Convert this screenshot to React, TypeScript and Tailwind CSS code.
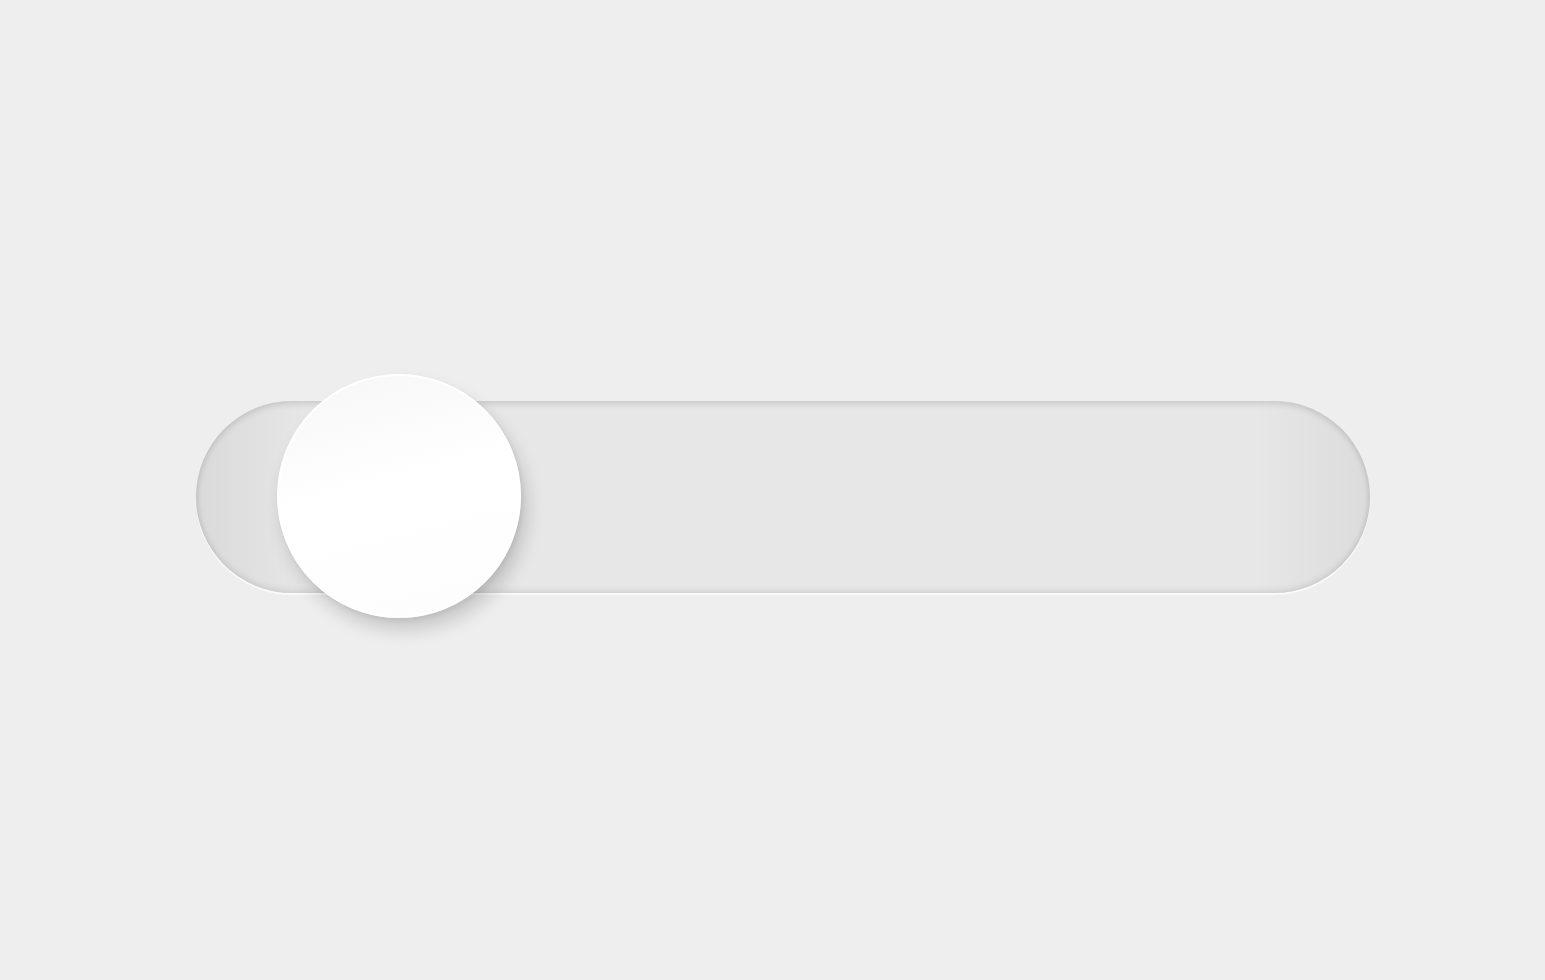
import { useState } from 'react';

export default function App() {
  const [on, setOn] = useState(false);

  return (
    <div className="min-h-screen w-full bg-[#eeeeee] pl-[196px] pt-[401px]">
      <button
        type="button"
        onClick={() => setOn(!on)}
        className="relative block h-[192px] w-[1174px] rounded-full bg-[#e7e7e7] shadow-[inset_0_3px_6px_rgba(0,0,0,0.12),inset_0_-3px_6px_rgba(0,0,0,0.08),0_2px_0_#fafafa]"
      >
        {/* darker shading toward the rounded ends */}
        <span className="absolute inset-0 rounded-full bg-[linear-gradient(90deg,rgba(0,0,0,0.06)_0%,rgba(0,0,0,0)_10%,rgba(0,0,0,0)_90%,rgba(0,0,0,0.05)_100%)]" />
        <span
          className={`absolute top-[-27px] h-[244px] w-[244px] rounded-full border-2 border-white bg-[linear-gradient(165deg,#f6f6f6_0%,#ffffff_45%,#fdfdfd_100%)] shadow-[6px_12px_18px_rgba(0,0,0,0.16),2px_3px_5px_rgba(0,0,0,0.06)] transition-all ${
            on ? 'left-[930px]' : 'left-[81px]'
          }`}
        />
      </button>
    </div>
  );
}
